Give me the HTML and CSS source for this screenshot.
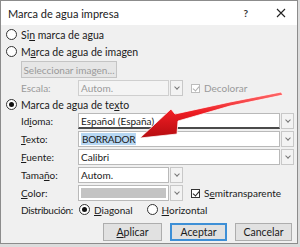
FILE: index.html
```html
<!DOCTYPE html>
<html lang="es">
<head>
  <meta charset="UTF-8" />
  <title>Marca de agua impresa</title>
  <link rel="stylesheet" href="styles.css">
</head>
<body>
  <div class="dialog">
    <div class="titlebar">
      <span class="title">Marca de agua impresa</span>
      <span class="help">?</span>
      <svg class="close" width="10" height="10" viewBox="0 0 10 10">
        <path d="M1 1 L9 9 M9 1 L1 9" stroke="#222" stroke-width="1.1" fill="none"/>
      </svg>
    </div>

    <div class="content">
      <div class="opt"><span class="radio"></span><span>Si<u>n</u> marca de agua</span></div>
      <div class="opt"><span class="radio"></span><span>M<u>a</u>rca de agua de imagen</span></div>

      <div class="sub">
        <button class="btn disabled">Seleccionar imagen...</button>
        <div class="field-row tight">
          <span class="lbl muted">Escala:</span>
          <div class="combo short disabled"><span class="val">Autom.</span></div>
          <span class="arrow"></span>
          <span class="check disabled checked"></span>
          <span class="chk-text muted">Decolorar</span>
        </div>
      </div>

      <div class="opt"><span class="radio on"></span><span>Marca de agua de te<u>x</u>to</span></div>

      <div class="sub">
        <div class="field-row">
          <span class="lbl">Id<u>i</u>oma:</span>
          <div class="combo long underlined"><span class="val">Español (España)</span></div>
          <span class="arrow"></span>
        </div>
        <div class="field-row">
          <span class="lbl"><u>T</u>exto:</span>
          <div class="combo long"><span class="val sel">BORRADOR</span></div>
          <span class="arrow"></span>
        </div>
        <div class="field-row">
          <span class="lbl"><u>F</u>uente:</span>
          <div class="combo long"><span class="val">Calibri</span></div>
          <span class="arrow"></span>
        </div>
        <div class="field-row">
          <span class="lbl">Tama<u>ñ</u>o:</span>
          <div class="combo short"><span class="val">Autom.</span></div>
          <span class="arrow"></span>
        </div>
        <div class="field-row">
          <span class="lbl"><u>C</u>olor:</span>
          <div class="combo short color"><span class="swatch"></span></div>
          <span class="arrow"></span>
          <span class="check checked"></span>
          <span class="chk-text">S<u>e</u>mitransparente</span>
        </div>
        <div class="field-row dist">
          <span class="lbl narrow">Distribución:</span>
          <span class="radio on"></span><span class="rtext"><u>D</u>iagonal</span>
          <span class="radio"></span><span class="rtext"><u>H</u>orizontal</span>
        </div>
      </div>

      <div class="buttons">
        <button class="btn"><u>A</u>plicar</button>
        <button class="btn primary">Aceptar</button>
        <button class="btn">Cancelar</button>
      </div>
    </div>

    <svg class="pointer" width="300" height="247" viewBox="0 0 300 247">
      <defs>
        <linearGradient id="red" x1="0" y1="0" x2="0" y2="1">
          <stop offset="0" stop-color="#ff6b6b"/>
          <stop offset="0.45" stop-color="#ec1c22"/>
          <stop offset="1" stop-color="#b50c10"/>
        </linearGradient>
      </defs>
      <path d="M140 138 L171 109 L175 114 L230 102 L281 92 L283 95 L230 106 L178 121 L177 134 Z"
            fill="url(#red)" stroke="#fff" stroke-width="1" stroke-linejoin="round" stroke-opacity="0.75"/>
    </svg>
  </div>
</body>
</html>
```

FILE: styles.css
```css
* {
  box-sizing: border-box;
}
body {
  margin: 0;
  width: 300px;
  height: 247px;
  background: #dcdcdc;
  font-family: 'Lato', 'Liberation Sans', sans-serif;
  font-size: 10px;
  color: #1a1a1a;
  overflow: hidden;
  white-space: nowrap;
}
u {
  text-decoration: underline;
  text-underline-offset: 1px;
}
.dialog {
  position: relative;
  width: 298px;
  height: 244px;
  background: #f0f0f0;
  border: 1px solid #8c8c8c;
}
.titlebar {
  height: 24px;
  background: #fff;
  display: flex;
  align-items: center;
  padding-left: 7px;
}
.title {
  font-size: 11px;
  flex: 1;
}
.help {
  font-size: 10px;
  font-weight: bold;
  color: #333;
  margin-right: 28px;
}
.close {
  margin-right: 11px;
}
.content {
  padding: 1px 0 0 5px;
}
.opt {
  display: flex;
  align-items: center;
  height: 17px;
  font-size: 10.5px;
}
.radio {
  width: 11px;
  height: 11px;
  border: 1px solid #333;
  border-radius: 50%;
  background: #fff;
  margin-right: 4px;
  flex: none;
  display: flex;
  align-items: center;
  justify-content: center;
}
.radio.on::after {
  content: "";
  width: 5px;
  height: 5px;
  border-radius: 50%;
  background: #111;
}
.sub {
  padding-left: 15px;
}
.btn {
  font-family: inherit;
  font-size: 10.5px;
  color: #1a1a1a;
  background: #e1e1e1;
  border: 1px solid #adadad;
  height: 18px;
  padding: 0 8px;
  white-space: nowrap;
}
.btn.disabled {
  display: block;
  font-size: 10px;
  color: #9a9a9a;
  background: #e6e6e6;
  border-color: #c4c4c4;
  height: 17px;
  margin: 1px 0 2px;
  width: 96px;
  padding: 0;
}
.field-row {
  display: flex;
  align-items: center;
  height: 16px;
  margin-bottom: 2px;
}
.field-row.tight {
  margin-bottom: 0;
}
.lbl {
  width: 57px;
  flex: none;
}
.lbl.narrow {
  letter-spacing: -0.3px;
}
.muted {
  color: #9a9a9a;
}
.combo {
  height: 16px;
  background: #fff;
  border: 1px solid #b9b9b9;
  display: flex;
  align-items: center;
  padding-left: 2px;
  flex: none;
}
.combo.long {
  width: 202px;
}
.combo.short {
  width: 91px;
}
.combo.disabled {
  background: #f4f4f4;
  border-color: #cfcfcf;
}
.combo.disabled .val {
  color: #9a9a9a;
}
.combo.underlined {
  border-bottom: 2px solid #4a4a4a;
}
.val.sel {
  background: #b7d7f3;
  padding: 0 1px;
  letter-spacing: -0.3px;
}
.combo.color {
  padding: 2px;
}
.swatch {
  display: block;
  width: 100%;
  height: 100%;
  background: #c3c3c3;
}
.arrow {
  width: 13px;
  height: 16px;
  margin-left: 1px;
  border: 1px solid #c8c8c8;
  background: #f3f3f3;
  display: flex;
  align-items: center;
  justify-content: center;
  flex: none;
}
.arrow::after {
  content: "";
  width: 3px;
  height: 3px;
  border-right: 1px solid #777;
  border-bottom: 1px solid #777;
  transform: rotate(45deg);
  margin-top: -2px;
}
.check {
  width: 9px;
  height: 9px;
  border: 1px solid #333;
  background: #fff;
  margin-left: 8px;
  margin-right: 4px;
  position: relative;
  flex: none;
}
.check.checked::after {
  content: "";
  position: absolute;
  left: 2px;
  top: 0;
  width: 3px;
  height: 5px;
  border-right: 1px solid #222;
  border-bottom: 1px solid #222;
  transform: rotate(40deg);
}
.check.disabled {
  border-color: #bdbdbd;
}
.check.disabled::after {
  border-color: #b0b0b0;
}
.dist {
  height: 15px;
  margin-top: -1px;
  margin-bottom: 0;
}
.rtext {
  margin-right: 13px;
}
.dist .radio {
  margin-left: 1px;
}
.buttons {
  display: flex;
  justify-content: flex-end;
  gap: 8px;
  padding-right: 5px;
  margin-top: 6px;
}
.buttons .btn {
  width: 57px;
  padding: 0;
}
.buttons .btn:first-child {
  width: 59px;
}
.btn.primary {
  border: 2px solid #3d8fd6;
}
.pointer {
  position: absolute;
  left: -1px;
  top: -1px;
  pointer-events: none;
}
```
